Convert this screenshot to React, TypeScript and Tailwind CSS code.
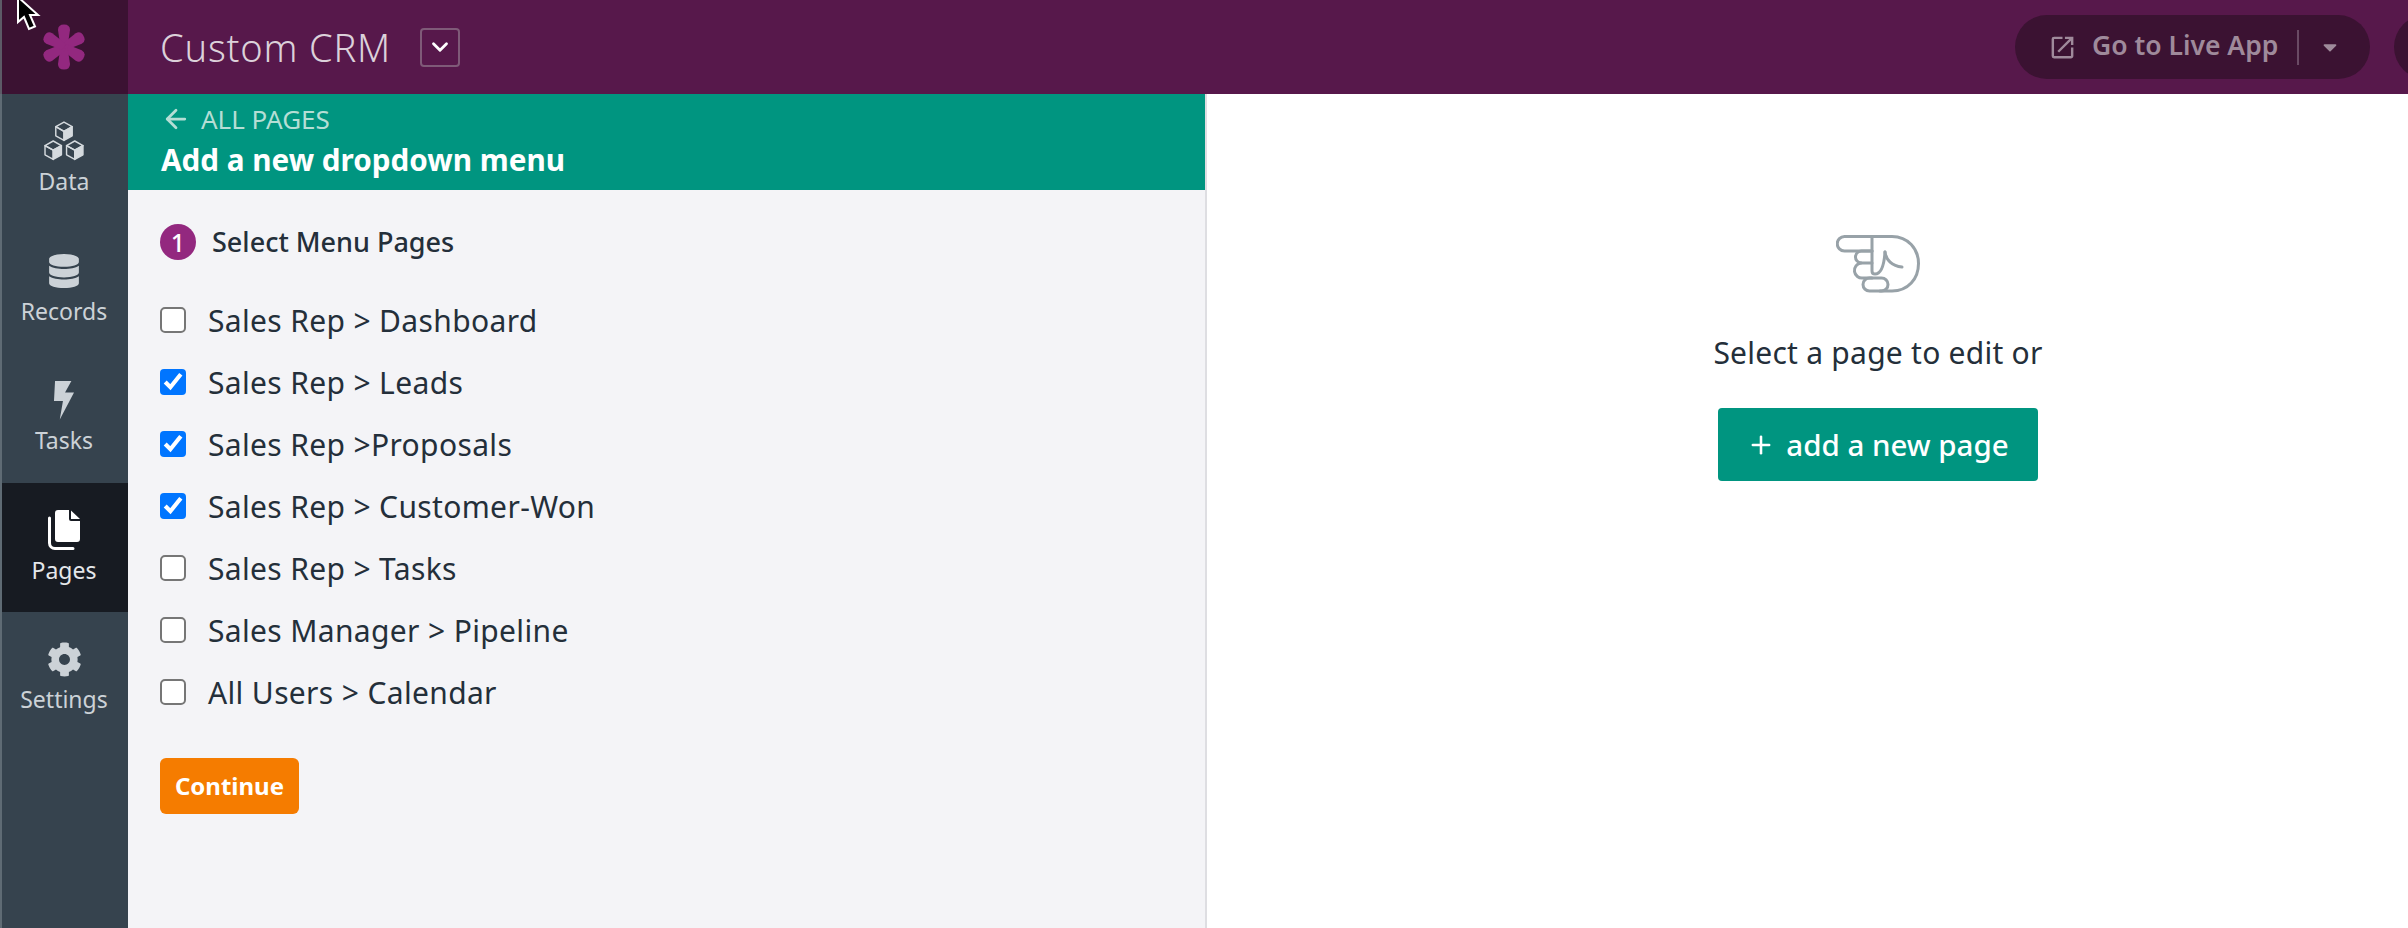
import React from 'react'
import { FaCog, FaDatabase, FaCaretDown } from 'react-icons/fa'
import { MdOpenInNew } from 'react-icons/md'
import { ArrowLeft, ChevronDown, Plus } from 'lucide-react'

const pages = [
  { label: 'Sales Rep > Dashboard', checked: false },
  { label: 'Sales Rep > Leads', checked: true },
  { label: 'Sales Rep >Proposals', checked: true },
  { label: 'Sales Rep > Customer-Won', checked: true },
  { label: 'Sales Rep > Tasks', checked: false },
  { label: 'Sales Manager > Pipeline', checked: false },
  { label: 'All Users > Calendar', checked: false },
]

function Logo() {
  return (
    <svg width="44" height="46" viewBox="-22 -23 44 46" fill="#93287f">
      {[0, 60, 120, 180, 240, 300].map(a => (
        <path key={a} transform={`rotate(${a})`} d="M-3.5 0 L-6 -17 Q-6 -22.5 0 -22.5 Q6 -22.5 6 -17 L3.5 0 Z" />
      ))}
    </svg>
  )
}

function Cube({ x, y }: { x: number; y: number }) {
  return (
    <g transform={`translate(${x} ${y})`}>
      <path d="M0 4.5 L8 0 L16 4.5 L8 9 Z" fill="none" stroke="currentColor" strokeWidth="1.4" strokeLinejoin="round" />
      <path d="M0 4.5 V13.5 L8 18 V9 Z" fill="none" stroke="currentColor" strokeWidth="1.4" strokeLinejoin="round" />
      <path d="M16 4.5 V13.5 L8 18 V9 Z" fill="currentColor" stroke="currentColor" strokeWidth="1.4" strokeLinejoin="round" />
    </g>
  )
}

function CubesIcon() {
  return (
    <svg width="43" height="40" viewBox="0 0 40 39" className="text-[#d5dade]">
      <Cube x={11.5} y={1} />
      <Cube x={1} y={19.5} />
      <Cube x={22} y={19.5} />
    </svg>
  )
}

function BoltIcon() {
  return (
    <svg width="22" height="39" viewBox="0 0 20 37" fill="currentColor">
      <path d="M1.5 0 H17 L11 11 H19.5 L6 36.5 L9 19 H0.5 Z" />
    </svg>
  )
}

function PagesIcon() {
  return (
    <svg width="32" height="40" viewBox="0 0 32 40" className="text-white">
      <path d="M10 0 H21 V9 a2 2 0 0 0 2 2 H32 V29 a3 3 0 0 1 -3 3 H10 a3 3 0 0 1 -3 -3 V3 a3 3 0 0 1 3 -3 Z" fill="currentColor" />
      <path d="M23 0.5 L32 9 H23 Z" fill="currentColor" />
      <path d="M1.5 8 V33 a5.5 5.5 0 0 0 5.5 5.5 H25" fill="none" stroke="currentColor" strokeWidth="3" strokeLinecap="round" />
    </svg>
  )
}

function HandIcon() {
  return (
    <svg width="84" height="58" viewBox="0 0 84 58" fill="none" stroke="#98a2a8" strokeWidth="3" strokeLinecap="round" strokeLinejoin="round">
      <path d="M36 1.5 H8.5 a7.2 7.2 0 0 0 0 14.5 H36" />
      <path d="M36 1.5 H56 C72 1.5 82.5 14 82.5 28.5 C82.5 44 72 56 56 56 H44" />
      <path d="M36 1.5 V36 q0 3 3 3 C45 39 48 32 49 17" />
      <path d="M49 17 C50 25 56 31 66 32" />
      <path d="M36 16 H26 a6 6 0 0 0 -1 12 H36" />
      <path d="M25 28 a7.5 7.5 0 0 0 2 15 H36" />
      <rect x="27" y="43" width="25" height="13" rx="6.5" />
    </svg>
  )
}

function Cursor() {
  return (
    <svg width="26" height="36" viewBox="0 0 26 36" className="absolute left-[16px] top-0">
      <path d="M2 -3 V22 L8 17 L13 29 L19 26.5 L14 15 L22 15 Z" fill="#000" stroke="#fff" strokeWidth="2" />
    </svg>
  )
}

function NavItem({ label, icon, active }: { label: string; icon: React.ReactNode; active?: boolean }) {
  return (
    <div className={`h-[129.5px] flex flex-col items-center pt-[27px] pr-[2px] ${active ? 'bg-[#171b22] text-[#e4e7ea]' : 'text-[#ccd2d7]'}`}>
      <div className="h-[40px] flex items-center justify-center">{icon}</div>
      <div className="mt-[5px] text-[23px] leading-[30px]">{label}</div>
    </div>
  )
}

export default function App() {
  return (
    <div className="relative w-[2408px] h-[928px] overflow-hidden flex flex-col bg-white text-[#242f3a] font-['Noto_Sans',sans-serif]">
      <header className="h-[94px] shrink-0 flex items-center bg-[#57184b] overflow-hidden">
        <div className="w-[128px] h-full border-l-2 border-[#5c5a66] pr-[2px] bg-[#3b1232] flex items-center justify-center">
          <Logo />
        </div>
        <h1 className="ml-[32px] text-[38px] tracking-[0.8px] leading-none font-light text-[#dcd1da]">Custom CRM</h1>
        <button className="ml-[29px] w-[40px] h-[39px] rounded-[4px] border-2 border-[#7f5a78] flex items-center justify-center text-white">
          <ChevronDown size={26} strokeWidth={2.6} />
        </button>
        <div className="ml-auto flex items-center">
          <button className="w-[355px] h-[64px] rounded-full bg-[#3b1232] flex items-center pl-[33px] text-[#9f8a9b]">
            <MdOpenInNew size={29} />
            <span className="ml-[15px] -mt-[2px] text-[26.5px] font-semibold">Go to Live App</span>
            <span className="ml-[19px] w-[2px] h-[35px] bg-[#6a4a64]" />
            <FaCaretDown size={22} className="ml-[20px]" />
          </button>
          <div className="ml-[24px] -mr-[50px] w-[64px] h-[64px] rounded-full bg-[#3b1232]" />
        </div>
      </header>

      <div className="flex-1 flex min-h-0">
        <nav className="w-[128px] shrink-0 border-l-2 border-[#5f6b74] bg-[#36434e]">
          <NavItem label="Data" icon={<CubesIcon />} />
          <NavItem label="Records" icon={<FaDatabase size={34} />} />
          <NavItem label="Tasks" icon={<BoltIcon />} />
          <NavItem label="Pages" icon={<PagesIcon />} active />
          <NavItem label="Settings" icon={<FaCog size={35} />} />
        </nav>

        <section className="w-[1079px] shrink-0 flex flex-col border-r-2 border-[#dedee2] bg-[#f4f4f7]">
          <div className="h-[96px] bg-[#009580] pl-[33px] pt-[8px]">
            <div className="flex items-center text-[#b5ded5] text-[26px] leading-[34px]">
              <ArrowLeft size={30} strokeWidth={2.2} />
              <span className="ml-[10px]">ALL PAGES</span>
            </div>
            <div className="text-white text-[29.7px] leading-[48px] font-bold">Add a new dropdown menu</div>
          </div>
          <div className="pl-[32px] pt-[34px]">
            <div className="flex items-center h-[36px]">
              <span className="w-[36px] h-[36px] rounded-full bg-[#93287f] text-white flex items-center justify-center text-[25px] font-medium leading-none">1</span>
              <span className="ml-[16px] text-[27px] font-medium">Select Menu Pages</span>
            </div>
            <div className="mt-[29px] flex flex-col">
              {pages.map(p => (
                <label key={p.label} className="h-[62px] flex items-center">
                  <input type="checkbox" defaultChecked={p.checked} className="[zoom:2] w-[13px] h-[13px] m-0" />
                  <span className="ml-[22px] pt-[2px] text-[30px] tracking-[0.35px] leading-none">{p.label}</span>
                </label>
              ))}
            </div>
            <button className="mt-[35px] w-[139px] h-[56px] rounded-[6px] bg-[#f57c00] text-white text-[24px] font-bold">Continue</button>
          </div>
        </section>

        <main className="flex-1 pl-[507px] pt-[141px]">
          <div className="w-[328px] flex flex-col items-center">
            <HandIcon />
            <div className="mt-[40px] text-[30px] tracking-[0.25px] leading-[40px] whitespace-nowrap">Select a page to edit or</div>
            <button className="mt-[35px] w-[320px] h-[73px] rounded-[4px] bg-[#009580] text-white flex items-center justify-center">
              <Plus size={28} strokeWidth={2.2} />
              <span className="ml-[11px] pt-[1px] text-[29.5px] font-medium">add a new page</span>
            </button>
          </div>
        </main>
      </div>

      <Cursor />
    </div>
  )
}
